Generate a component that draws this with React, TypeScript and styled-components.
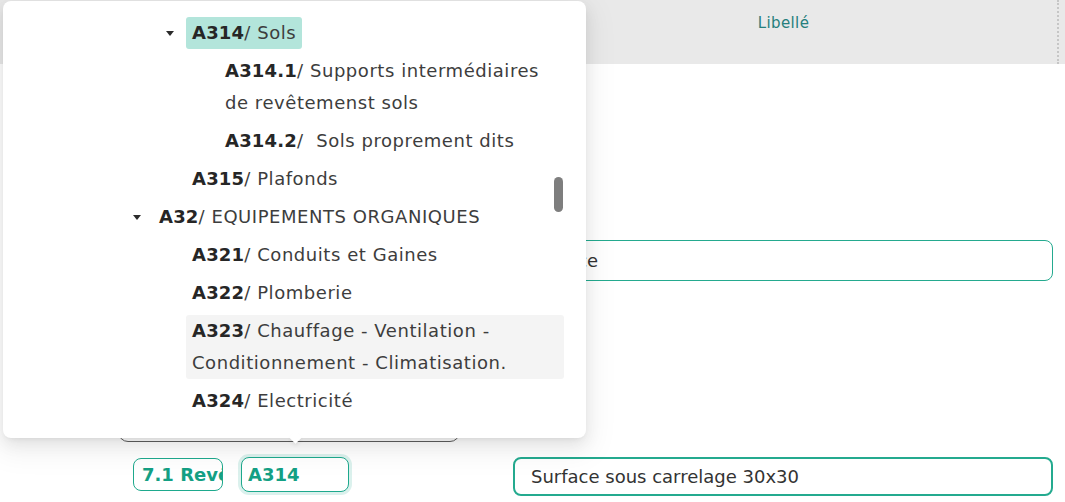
import React from "react";
import styled, { createGlobalStyle } from "styled-components";

const GlobalStyle = createGlobalStyle`
  html, body {
    margin: 0;
    padding: 0;
    background: #ffffff;
    font-family: "DejaVu Sans", "Noto Sans", sans-serif;
    overflow: hidden;
  }
`;

type TreeNode = {
  level: number;
  code: string;
  label: string;
  expanded?: boolean;
  selected?: boolean;
  hovered?: boolean;
};

const nodes: TreeNode[] = [
  { level: 3, code: "A314", label: "/ Sols", expanded: true, selected: true },
  { level: 4, code: "A314.1", label: "/ Supports intermédiaires de revêtemenst sols" },
  { level: 4, code: "A314.2", label: "/\u00a0 Sols proprement dits" },
  { level: 3, code: "A315", label: "/ Plafonds" },
  { level: 2, code: "A32", label: "/ EQUIPEMENTS ORGANIQUES", expanded: true },
  { level: 3, code: "A321", label: "/ Conduits et Gaines" },
  { level: 3, code: "A322", label: "/ Plomberie" },
  { level: 3, code: "A323", label: "/ Chauffage - Ventilation - Conditionnement - Climatisation.", hovered: true },
  { level: 3, code: "A324", label: "/ Electricité" },
];

export default function App() {
  return (
    <>
      <GlobalStyle />
      <Page>
        <HeaderRow>
          <HeadCell />
          <HeadCell $dotted>Libellé</HeadCell>
          <HeadCell />
        </HeaderRow>

        <BodyRow>
          <Cell />
          <Cell $padTop={176}>
            <TextField $border={1} readOnly value="Faïence" />
          </Cell>
          <Cell />
        </BodyRow>

        <BodyRow>
          <LeftCell>
            <SelectBox />
            <ChipRow>
              <Chip>7.1 Revêtement</Chip>
              <CodeInput readOnly value="A314" />
            </ChipRow>
          </LeftCell>
          <Cell $padTop={157}>
            <TextField $border={2} readOnly value="Surface sous carrelage 30x30" />
          </Cell>
          <Cell />
        </BodyRow>

        <Dropdown>
          <TreeList>
            {nodes.map((n) => (
              <TreeRow key={n.code} $level={n.level}>
                <Switcher>{n.expanded && <Caret />}</Switcher>
                <NodeContent $selected={n.selected} $hovered={n.hovered}>
                  <Code>{n.code}</Code>
                  {n.label}
                </NodeContent>
              </TreeRow>
            ))}
          </TreeList>
          <ScrollThumb />
        </Dropdown>
      </Page>
    </>
  );
}

const Page = styled.div`
  position: relative;
  width: 1065px;
  height: 502px;
  overflow: hidden;
  background: #ffffff;
`;

const HeaderRow = styled.div`
  display: grid;
  grid-template-columns: 510px 549px 1fr;
  height: 64px;
  background: #e9e9e9;
`;

const HeadCell = styled.div<{ $dotted?: boolean }>`
  display: flex;
  justify-content: center;
  padding-top: 14px;
  box-sizing: border-box;
  font-size: 15px;
  letter-spacing: 0.4px;
  color: #267f7d;
  border-right: ${(p) => (p.$dotted ? "2px dotted #c6c6c6" : "none")};
`;

const BodyRow = styled.div`
  display: grid;
  grid-template-columns: 510px 547px 1fr;
`;

const Cell = styled.div<{ $padTop?: number }>`
  padding: ${(p) => p.$padTop ?? 0}px 4px 19px 3px;
`;

const LeftCell = styled.div`
  display: flex;
  flex-direction: column;
  align-items: flex-start;
  padding: 100px 0 0 118px;
`;

const SelectBox = styled.div`
  width: 342px;
  height: 42px;
  box-sizing: border-box;
  border: 1px solid #5e5e5e;
  border-radius: 10px;
`;

const ChipRow = styled.div`
  display: flex;
  align-items: center;
  gap: 18px;
  margin-top: 15px;
  padding-left: 15px;
`;

const Chip = styled.div`
  width: 90px;
  height: 33px;
  box-sizing: border-box;
  padding: 0 8px;
  border: 1px solid #1ea98d;
  border-radius: 8px;
  color: #14a084;
  font-size: 18px;
  font-weight: 700;
  line-height: 31px;
  white-space: nowrap;
  overflow: hidden;
`;

const CodeInput = styled.input`
  width: 108px;
  height: 35px;
  box-sizing: border-box;
  padding: 0 6px;
  border: 1px solid #1ea98d;
  border-radius: 8px;
  box-shadow: 0 0 0 3px rgba(30, 169, 141, 0.16);
  outline: none;
  color: #14a084;
  font-family: "DejaVu Sans", sans-serif;
  font-size: 18px;
  font-weight: 700;
  background: #ffffff;
`;

const TextField = styled.input<{ $border: number }>`
  display: block;
  width: 100%;
  height: ${(p) => (p.$border === 1 ? 41 : 39)}px;
  box-sizing: border-box;
  padding: 0 16px;
  border: ${(p) => p.$border}px solid #24aa8f;
  border-radius: 8px;
  outline: none;
  background: #ffffff;
  color: #333333;
  font-family: "DejaVu Sans", sans-serif;
  font-size: 18px;
`;

const Dropdown = styled.div`
  position: absolute;
  left: 3px;
  top: 1px;
  width: 583px;
  height: 437px;
  background: #ffffff;
  border-radius: 8px;
  box-shadow: 0 6px 16px 0 rgba(0, 0, 0, 0.08), 0 3px 6px -4px rgba(0, 0, 0, 0.12),
    0 9px 28px 8px rgba(0, 0, 0, 0.05);

  &::after {
    content: "";
    position: absolute;
    left: 50%;
    bottom: -4px;
    width: 9px;
    height: 9px;
    margin-left: -4px;
    background: #ffffff;
    transform: rotate(45deg);
    box-shadow: 2px 2px 4px rgba(0, 0, 0, 0.05);
  }
`;

const TreeList = styled.div`
  display: flex;
  flex-direction: column;
  gap: 6px;
  padding: 16px 22px 0 51px;
  color: #3d3d3d;
  font-size: 18px;
  letter-spacing: 0.55px;
`;

const TreeRow = styled.div<{ $level: number }>`
  display: flex;
  align-items: flex-start;
  padding-left: ${(p) => p.$level * 33}px;
`;

const Switcher = styled.span`
  flex: 0 0 33px;
  height: 32px;
  display: flex;
  align-items: center;
  justify-content: center;
`;

const Caret = styled.span`
  width: 0;
  height: 0;
  margin-left: 1px;
  border-left: 4.5px solid transparent;
  border-right: 4.5px solid transparent;
  border-top: 5px solid #2b2b2b;
`;

const NodeContent = styled.span<{ $selected?: boolean; $hovered?: boolean }>`
  flex: ${(p) => (p.$selected ? "0 0 auto" : "1 1 auto")};
  padding: 0 6px;
  line-height: 32px;
  border-radius: 3px;
  background: ${(p) => (p.$selected ? "#b3e5db" : p.$hovered ? "#f4f4f4" : "transparent")};
`;

const Code = styled.b`
  font-weight: 700;
  color: #262626;
  letter-spacing: 0.2px;
`;

const ScrollThumb = styled.div`
  position: absolute;
  left: 551px;
  top: 176px;
  width: 9px;
  height: 35px;
  border-radius: 5px;
  background: #7e7e7e;
`;
